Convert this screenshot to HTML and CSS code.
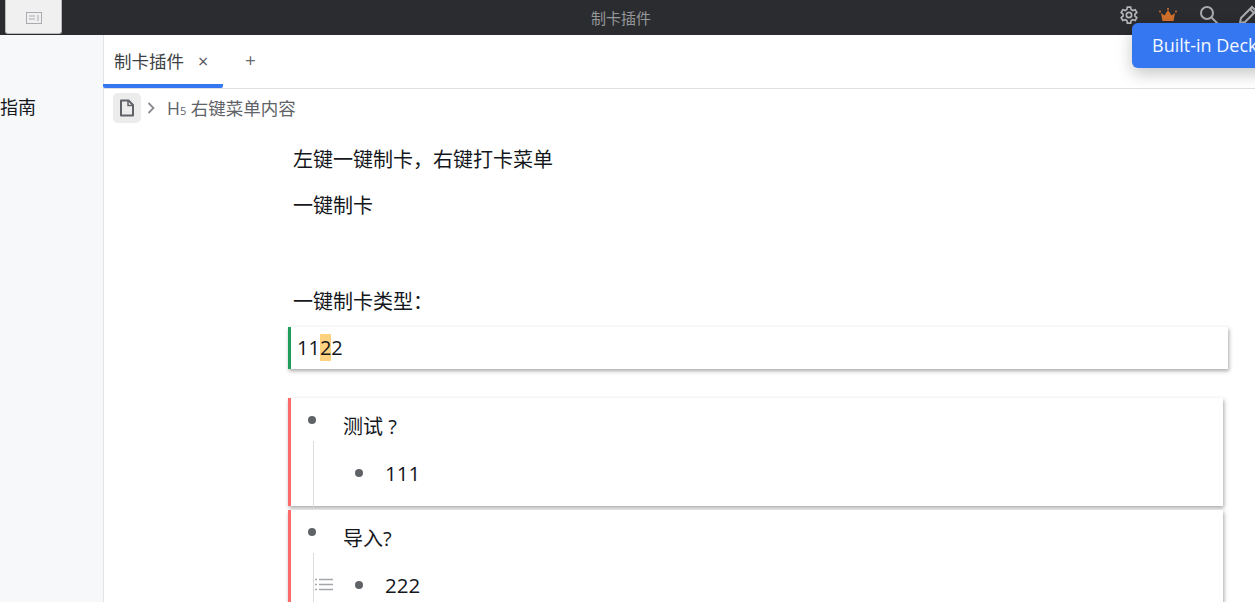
FILE: index.html
```html
<!DOCTYPE html>
<html lang="zh">
<head>
<title>制卡插件</title>
<meta charset="UTF-8">
<link rel="stylesheet" href="styles.css">
</head>
<body>
<div class="titlebar">
    <div class="sidebar-toggle">
        <svg width="16" height="12" viewBox="0 0 16 12" fill="none" stroke="#a9abb0"><rect x="0.5" y="0.5" width="15" height="11"/><path d="M3 4h6M3 7h6M12 3v6"/></svg>
    </div>
    <div class="title">制卡插件</div>
    <div class="toolbar">
        <svg class="tool gear" width="20" height="20" viewBox="0 0 24 24" fill="none" stroke="#b4b5b8" stroke-width="2"><circle cx="12" cy="12" r="3.2"/><path d="M10 2.5h4l.6 3 1.9 1.1 2.9-1 2 3.4-2.3 2 0 2.2 2.3 2-2 3.4-2.9-1-1.9 1.1-.6 3h-4l-.6-3-1.9-1.1-2.9 1-2-3.4 2.3-2 0-2.2-2.3-2 2-3.4 2.9 1 1.900-1.1z"/></svg>
        <svg class="tool crown" width="18" height="14" viewBox="0 0 18 14"><path d="M2 5l3.5 2.5L9 2l3.500 5.500L16 5l-1.500 8h-11z" fill="#d2702c"/><circle cx="1" cy="3.500" r="1" fill="#d2702c"/><circle cx="9" cy="1" r="1" fill="#d2702c"/><circle cx="17" cy="3.500" r="1" fill="#d2702c"/></svg>
        <svg class="tool search" width="20" height="20" viewBox="0 0 20 20" fill="none" stroke="#a9aaad" stroke-width="2"><circle cx="8" cy="8" r="6"/><path d="M12.500 12.500l6.500 6.500"/></svg>
        <svg class="tool pencil" width="20" height="20" viewBox="0 0 20 20" fill="none" stroke="#a9aaad" stroke-width="2"><path d="M2 18l1-5L14 2l4 4L7 17z"/><path d="M12 4l4 4"/></svg>
    </div>
</div>
<div class="notice">Built-in Deck</div>
<div class="main">
    <div class="sidebar"><div class="side-item">指南</div></div>
    <div class="pane">
        <div class="tabs">
            <div class="tab">制卡插件<span class="tab-close">×</span></div>
            <div class="tab-add">+</div>
        </div>
        <div class="breadcrumb">
            <span class="doc-icon">
                <svg width="16" height="18" viewBox="0 0 16 18" fill="none" stroke="#5f6368" stroke-width="2"><path d="M2 1.500h7.500L14 6v10.500H2z" stroke-linejoin="round"/><path d="M9 1.500V6.500h5" stroke-width="1.500"/></svg>
            </span>
            <svg class="crumb-arrow" width="8" height="12" viewBox="0 0 8 12" fill="none" stroke="#8a8c90" stroke-width="1.800"><path d="M1.500 1l5 5-5 5"/></svg>
            <span class="crumb-text"><span class="h5">H<small>5</small></span> 右键菜单内容</span>
        </div>
        <div class="content">
            <p class="para first">左键一键制卡，右键打卡菜单</p>
            <p class="para">一键制卡</p>
            <p class="para empty">&nbsp;</p>
            <p class="para">一键制卡类型：</p>
            <div class="block green">11<mark>2</mark>2</div>
            <div class="block red wide-gap">
                <div class="item">测试 ?</div>
                <div class="sub"><div class="item inner">111</div></div>
            </div>
            <div class="block red">
                <div class="item">导入?</div>
                <div class="sub">
                    <svg class="list-icon" width="18" height="13" viewBox="0 0 18 13" fill="none" stroke="#a4a6aa" stroke-width="1.500"><path d="M0 1.500h2M4 1.500h14M0 6.500h2M4 6.500h14M0 11.500h2M4 11.500h14"/></svg>
                    <div class="item inner">222</div>
                </div>
            </div>
        </div>
    </div>
</div>
</body>
</html>
```

FILE: styles.css
```css
html, body {
    height: 100%;
}

body {
    margin: 0;
    height: 602px;
    overflow: hidden;
    background-color: #fff;
    color: #14171c;
    font-family: "Open Sans", "Noto Sans CJK SC", sans-serif;
    font-size: 18px;
    position: relative;
}

.titlebar {
    height: 35px;
    background-color: #2b2c2f;
    display: flex;
    align-items: center;
    position: relative;
}

.sidebar-toggle {
    width: 57px;
    height: 34px;
    margin-left: 5px;
    margin-top: -1px;
    background-color: #f0f0f0;
    border: 1px solid #b9b9b9;
    border-top: none;
    border-radius: 0 0 3px 3px;
    display: flex;
    align-items: center;
    justify-content: center;
    padding-top: 3px;
    box-sizing: border-box;
}

.title {
    flex: 1;
    text-align: center;
    font-size: 15px;
    color: #97989b;
    padding-left: 68px;
}

.toolbar {
    display: flex;
    align-items: center;
    width: 143px;
    flex: none;
    height: 30px;
    margin-top: -6px;
}

.tool {
    flex: none;
}

.gear { margin-left: 7px; }
.crown { margin-left: 20px; }
.search { margin-left: 22px; }
.pencil { margin-left: 19px; }

.notice {
    position: absolute;
    top: 23px;
    left: 1132px;
    width: 140px;
    height: 45px;
    box-sizing: border-box;
    padding: 10px 0 0 20px;
    background-color: #3577f1;
    border-radius: 6px;
    color: #f4f8ff;
    font-size: 18px;
    font-weight: 500;
    line-height: 24px;
    white-space: nowrap;
    box-shadow: 0 6px 16px rgba(0, 0, 0, 0.22);
}

.main {
    display: flex;
    height: 567px;
    overflow: hidden;
}

.sidebar {
    width: 103px;
    flex: none;
    background-color: #f7f8fa;
    border-right: 1px solid #e3e4e6;
}

.side-item {
    margin-top: 60px;
    font-size: 18px;
    line-height: 24px;
}

.pane {
    flex: 1;
    min-width: 0;
}

.tabs {
    height: 53px;
    border-bottom: 1px solid #dedfe1;
    display: flex;
    box-sizing: content-box;
}

.tab {
    width: 120px;
    height: 53px;
    margin-left: -1px;
    box-sizing: border-box;
    padding: 13px 0 0 11px;
    border-bottom: 4px solid #3577f1;
    border-radius: 0 0 2px 2px;
    font-size: 17.5px;
    line-height: 26px;
    color: #3c3f44;
    white-space: nowrap;
}

.tab-close {
    margin-left: 14px;
    color: #55585c;
    font-size: 18px;
}

.tab-add {
    margin-left: 22px;
    padding-top: 12px;
    font-size: 19px;
    line-height: 26px;
    color: #66696d;
}

.breadcrumb {
    height: 38px;
    display: flex;
    align-items: center;
    padding-left: 9px;
    color: #606368;
}

.doc-icon {
    width: 28px;
    height: 30px;
    border-radius: 5px;
    background-color: #ececec;
    display: flex;
    align-items: center;
    justify-content: center;
}

.crumb-arrow {
    margin: 0 12px 0 6px;
}

.crumb-text {
    font-size: 17.5px;
    margin-bottom: 2px;
    white-space: nowrap;
}

.h5 small {
    font-size: 11px;
}

.content {
    padding: 8px 27px 0 184px;
}

.para {
    margin: 0 0 20px 5px;
    font-size: 20px;
    line-height: 26px;
}

.para.first {
    margin-top: 12px;
}

.para.empty {
    margin-bottom: 0;
    height: 50px;
}

.block {
    border-left: 3px solid #1f9d5c;
    background-color: #fff;
    box-shadow: 1px 2px 4px rgba(0, 0, 0, 0.35);
}

.block.green {
    height: 42px;
    margin-top: -8px;
    line-height: 42px;
    padding-left: 6px;
    font-size: 20px;
}

mark {
    background-color: #ffd27f;
    color: inherit;
}

.block.red {
    border-left-color: #ff6b6b;
    margin-top: 4px;
    margin-right: 5px;
    height: 108px;
    padding-left: 22px;
}

.block.red.wide-gap {
    margin-top: 29px;
}

.block.red + .block.red {
    height: 120px;
}

.item {
    position: relative;
    font-size: 20px;
    line-height: 26px;
    padding: 16px 0 0 30px;
}

.item::before {
    content: "";
    position: absolute;
    left: -5px;
    top: 18px;
    width: 8px;
    height: 8px;
    border-radius: 50%;
    background-color: #5f6368;
}

.sub {
    position: relative;
    margin-top: 1px;
    border-left: 1px solid #dcdcdc;
    height: 66px;
    padding-left: 41px;
}

.item.inner {
    font-size: 20.5px;
    padding: 19px 0 0 30px;
}

.item.inner::before {
    left: 0;
    top: 28px;
}

.list-icon {
    position: absolute;
    left: 1px;
    top: 25px;
}
```
